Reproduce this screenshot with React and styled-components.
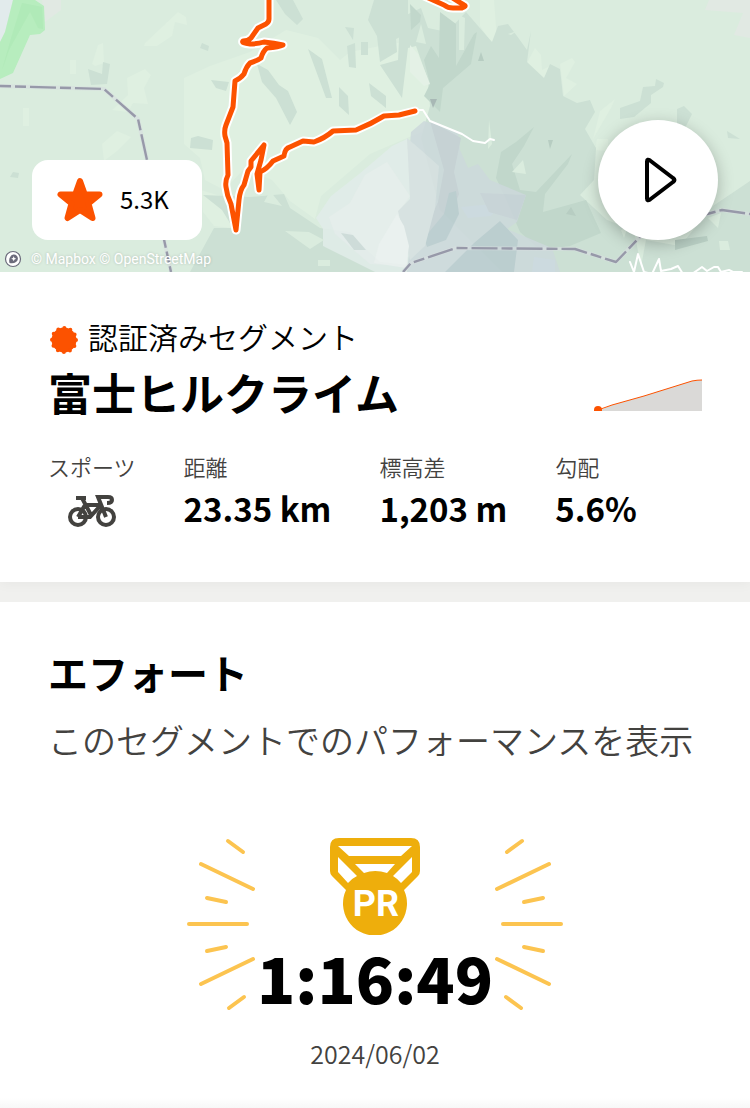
import React from 'react'
import styled, { createGlobalStyle } from 'styled-components'


const GlobalStyle = createGlobalStyle`
  * {
    box-sizing: border-box;
  }

  body {
    margin: 0;
    background: #f0f0ee;
    color: #000;
    font-family: "Noto Sans CJK JP", sans-serif;
  }
`

const stats = [
  { label: '距離', value: '23.35 km' },
  { label: '標高差', value: '1,203 m' },
  { label: '勾配', value: '5.6%' }
]

// one side of the burst around the medal, the other side is mirrored
const rays = [
  'M41 3L56 14',
  'M14 26L66 51',
  'M20 60L39 64',
  'M2 86H60',
  'M20 113L39 109',
  'M14 146L66 121',
  'M42 170L57 159'
]

const track = 'M269 -4V19Q269 22 266 24L258 28 251 38Q248 41 243 41 241 43 250 44 258 44 264 42 274 43 283 45 279 47 267 48 263 51 261 58 257 61 250 63 246 67 244 74 241 78 235 81L233 107 226 125Q224 130 225 136L227 143 228 175Q225 181 226 187 227 196 231 204L236 230 239 200Q240 190 244 185L248 171 251 167V161L264 145 261 160 257 174 259 190M259 190L260 172Q267 169 273 161L284 156Q285 148 290 147L303 141 314 142Q325 138 333 131L356 130Q371 124 384 116L399 115 415 111M424 -4L444 5Q448 8 453 8H462Q467 6 464 5L451 -3'


const TerrainMap = () =>
  <MapDrawing viewBox="0 0 750 272" preserveAspectRatio="xMidYMid slice" aria-hidden="true">
    <path fill="#daecde" d="M0 0H750V272H0z" />
    <path fill="#e2ebec" d="M0 0H13L5 32 0 42z" />
    <path fill="#e1e9e3" d="M42 0H61V10L45 22zM709 0H750V38L734 35 743 13 705 10z" />
    <path fill="#b7edbe" d="M13 0H35L44 6 45 30 40 34 30 35 13 73 0 79V42L5 32z" />
    <path fill="#a9e7b2" opacity=".5" d="M22 3L42 7 43 29 38 28 30 12 20 30 9 50 2 70 12 35z" />

    {/* open meadows */}
    <g fill="#dff0e1">
      <path d="M145 43L162 27 178 12 186 17 187 25 175 22 172 36 157 46 144 46z" />
      <path d="M127 78L145 69 151 75 144 88 148 104 133 103 128 112 112 110 128 95z" />
      <path d="M92 64L98 45 103 43 104 63 95 66zM70 60H76V74H70zM23 108H29V126H23z" />
      <path d="M102 144L117 131 131 137 117 151 104 161z" />
      <path d="M184 78L210 66 250 52 286 30 318 38 340 60 350 52 390 44 420 40 431 77 438 108 421 132 370 154 321 196 315 219 290 201 272 180 245 168 224 190 205 180 200 158 184 144z" />
      <path d="M201 190L233 200 232 228 214 226 203 212z" />
      <path d="M480 0H494L497 40 491 42 480 26zM520 76L535 48 541 55 542 70 552 65 546 83 540 77zM560 64L572 58 575 62 566 78 577 84 564 96z" />
      <path d="M570 134L577 116 585 120 581 135zM600 111L615 99 611 108 593 139zM597 139H608V151L595 150z" />
    </g>

    {/* shaded slopes */}
    <g fill="#cce0d4">
      <path d="M88 69L102 74 103 62 110 64 107 84 91 85z" />
      <path d="M191 138L198 136 213 140 212 150 190 148zM211 80L229 82 226 91 216 88zM202 43L209 46 208 51 200 48zM13 172L19 173 18 178 10 177z" />
      <path d="M203 195L250 197 284 194 290 208 320 228 350 232 362 245 380 262 407 265 407 272H190L202 250 214 228 233 228 222 210z" />
      <path d="M276 0H293L303 19 297 25 285 14zM308 49L322 59 332 98 326 98zM257 64L268 70 279 85 288 91 297 112 290 125 276 98 262 82z" />
      <path d="M339 87L348 96 349 115 339 106zM369 83L386 96 386 108 371 96zM347 46L355 43 356 68 349 67zM361 42H368V55H361zM345 27L354 28 353 40z" />
      <path d="M374 0H408V33L396 39 397 52 380 62 377 36 368 20z" />
      <path d="M400 18L421 8 428 28 447 32 466 12 492 42 498 26 508 24 517 36 527 50 531 31 527 62 544 78 550 64 560 69 563 96 577 103 590 100 595 112 585 129 596 148 594 180 580 195 607 220 634 230 642 272H502L440 210 421 138 430 106 428 80 416 46 408 48 402 98 380 65 398 60z" />
      <path d="M620 108L640 101 643 87 655 86 656 79 664 83 663 87 651 95 651 103 634 117 620 119zM677 109L684 106 692 114 685 128 677 124z" />
      <path d="M727 131L740 139 728 138zM713 206L750 181V272H640L646 240 680 246z" />
    </g>
    <g fill="#c1d7cb">
      <path d="M410 4L421 15 420 22 411 30zM440 12L456 24V66L474 34 477 32 471 64 443 88 440 112 424 96 430 84 424 60 431 46 439 58z" />
      <path d="M501 152L516 142 534 127 524 146 512 164 520 190 536 192 572 154 568 164 545 194 543 212 586 200 601 233 570 246 540 250 520 232 504 195 496 178z" />
    </g>
    <path fill="#e4f1e6" d="M410 45L418 54 430 84 424 86 410 72z" />
    <path fill="#a8b8b5" d="M430 99H437L433 108z" />
    <path fill="#b7cdc2" d="M548 140H553L550 149zM675 240L707 236 708 241 675 250zM571 207L576 216 566 214zM481 52L484 61H478z" />

    {/* rocky summit */}
    <g opacity=".85">
      <path fill="#cdd9dc" d="M411 132L424 121 458 132 460 150 468 168 478 164 490 180 526 195 517 222 507 229 552 248 560 272H403L405 205z" />
      <path fill="#c5d0d5" d="M430 121L461 138 454 172 459 194 450 218 427 246 430 220 438 202 444 170z" />
      <path fill="#b9cbcf" d="M456 191L459 214 446 240 427 247 424 238 444 214 449 193zM500 221L518 240 514 272H445L474 243z" />
      <path fill="#cdd9e1" d="M461 207L503 203 491 216 468 218zM534 257L555 260V272H532z" />
      <path fill="#c8d3d8" d="M480 193L526 195 517 220 489 212z" />
      <path fill="#e2edea" d="M392 146L407 139 414 205 407 272H375L323 246V229L316 218 331 196 359 174z" />
      <path fill="#e8efee" d="M365 175L387 162 410 196 400 210 409 244 407 266 370 264 335 234 329 217 350 203z" />
      <path fill="#d7e1e2" d="M407 138L421 150 439 166 435 208 425 246 410 260 402 228 398 211 410 199z" />
      <path fill="#edf2f2" d="M379 244L397 214 404 226 409 246 406 268 374 263z" />
      <path fill="#cfdcdb" d="M341 233L353 235 366 250 354 250z" />
    </g>

    {/* clearings on the dark slopes */}
    <g fill="#daecde">
      <path d="M270 191L282 206 264 202zM285 231L309 232 324 240 310 249zM318 260H330V266H318z" />
      <path d="M430 14L437 18 436 28 430 26zM421 24L426 44 416 42zM459 15L465 18 464 50H459zM508 34L517 31 511 35z" />
      <path d="M489 120L492 144 488 149zM512 172L523 160 526 174z" />
      <path d="M621 230L628 226 624 238zM708 218L721 213 718 228zM719 241L728 241 730 250 720 250z" />
    </g>

    <Boundary d="M0 86L104 89 138 119 147 160 171 272" />
    <Boundary d="M403 272L411 263 456 248 575 249 616 262 660 216 707 214 722 210 750 214" />

    <g fill="none" stroke="#fff" strokeLinecap="round" strokeLinejoin="round" strokeWidth="2">
      <path d="M415 110L423 110 430 121 462 134 473 141 485 143 490 139 494 140" />
      <path d="M630 262L634 272 638 254 644 272 652 274 659 259 661 271 671 269 678 266 683 274M692 274L702 267 707 271 714 267 718 267 721 272 729 270 733 272 742 272" />
    </g>

    <Track d={track} $halo />
    <Track d={track} />
  </MapDrawing>


export default function App() {
  return (
    <Page>
      <GlobalStyle />

      <MapPanel>
        <TerrainMap />
        <StarButton type="button">
          <svg width="48" height="46" viewBox="0 0 48 46" aria-hidden="true">
            <path
              fill="#fc5200" stroke="#fc5200" strokeWidth="6" strokeLinejoin="round"
              d="M24 4L28.8 17.5H43.5L32.5 26.5 36.5 41 24 33 11.5 41 15.5 26.5 4.5 17.5H19.2z"
            />
          </svg>
          <span>5.3K</span>
        </StarButton>
        <PlayButton type="button" aria-label="再生">
          <svg width="36" height="48" viewBox="0 0 36 48" aria-hidden="true">
            <path fill="none" stroke="#000" strokeWidth="4" strokeLinejoin="round" d="M5 5.5Q5 2.5 8 4.5L31 22Q34 24 31 26L8 43.5Q5 45.5 5 42.5z" />
          </svg>
        </PlayButton>
        <Attribution>
          <svg width="18" height="18" viewBox="0 0 18 18" aria-hidden="true">
            <circle cx="9" cy="9" r="7.5" fill="#fff" stroke="#6b6b7b" strokeWidth="1.2" />
            <path fill="#6b6b7b" d="M5.5 13Q4.5 9 6.5 6.5A4 4 0 1 1 12 12Q9.5 13.8 5.5 13z" />
            <path fill="#fff" d="M9.7 6.2L10.5 7.9 12.2 8.7 10.5 9.5 9.7 11.2 8.9 9.5 7.2 8.7 8.9 7.9z" />
          </svg>
          <span>
            <a href="#mapbox">© Mapbox</a> <a href="#osm">© OpenStreetMap</a>
          </span>
        </Attribution>
      </MapPanel>

      <Summary>
        <Verified>
          <svg width="28" height="28" viewBox="0 0 28 28" aria-hidden="true">
            <circle cx="14" cy="14" r="12.5" fill="#fc5200" />
            <circle cx="14" cy="14" r="12" fill="none" stroke="#fc5200" strokeWidth="4" strokeLinecap="round" strokeDasharray="0 6.283" />
          </svg>
          認証済みセグメント
        </Verified>
        <TitleRow>
          <Title>富士ヒルクライム</Title>
          <svg width="108" height="32" viewBox="0 0 108 32" aria-hidden="true">
            <path fill="#dad9d7" d="M4 32L18 26 50 17 98 2 108 1V32z" />
            <path fill="none" stroke="#fc5200" d="M4 31L18 26 50 17 98 2Q103 1 108 1" />
            <circle cx="4" cy="31" r="4" fill="#fc5200" />
          </svg>
        </TitleRow>
        <Stats>
          <Stat>
            <dt>スポーツ</dt>
            <SportValue>
              <svg width="50" height="34" viewBox="0 0 50 34" role="img" aria-label="自転車">
                <g fill="none" stroke="#43423f" strokeWidth="4">
                  <circle cx="11" cy="22" r="8" />
                  <circle cx="39" cy="22" r="8" />
                  <path d="M9 3H19M15 3L24 20M11 22L18 10H34M11 22H23L34 10M39 22L31 2H41Q45 2 45 5T40 8" />
                </g>
              </svg>
            </SportValue>
          </Stat>
          {stats.map(({ label, value }) =>
            <Stat key={label}>
              <dt>{label}</dt>
              <dd>{value}</dd>
            </Stat>
          )}
        </Stats>
      </Summary>

      <Efforts>
        <SectionTitle>エフォート</SectionTitle>
        <Description>このセグメントでのパフォーマンスを表示</Description>
        <Best>
          <Rays />
          <Record>
            <Medal />
            <Time>1:16:49</Time>
          </Record>
          <Rays $flip />
        </Best>
        <DateText dateTime="2024-06-02">2024/06/02</DateText>
      </Efforts>
    </Page>
  )
}

function Boundary({ d }) {
  return (
    <g fill="none" strokeLinejoin="round">
      <path d={d} stroke="#d7dde0" strokeWidth="4" opacity=".6" />
      <path d={d} stroke="#9799a9" strokeWidth="2.4" strokeDasharray="26 4 11 4" strokeDashoffset="15" />
    </g>
  )
}

function Rays({ $flip }) {
  return (
    <RaysDrawing $flip={$flip} width="68" height="173" viewBox="0 0 68 173" aria-hidden="true">
      {rays.map(d => <path key={d} d={d} />)}
    </RaysDrawing>
  )
}

function Medal() {
  return (
    <svg width="90" height="97" viewBox="0 0 90 97" role="img" aria-label="PR">
      <path
        fill="#eeae0c" fillRule="evenodd"
        d="M9 0H81Q90 0 90 9V33Q90 36 88 38L74 52A32 32 0 1 1 16 52L2 38Q0 36 0 33V9Q0 0 9 0zM8 8L19 18H71L82 8zM8 19V34L18 45Q21 41 27 38zM82 19V34L71 45Q68 41 63 38zM25 26L34 35Q45 31 57 35L65 26z"
      />
      <MedalText x="46" y="78" textAnchor="middle">PR</MedalText>
    </svg>
  )
}


const Page = styled.main`
  display: flex;
  flex-direction: column;
`

const MapPanel = styled.section`
  position: relative;
  height: 272px;
  overflow: hidden;
`

const MapDrawing = styled.svg`
  display: block;
  width: 100%;
  height: 100%;
`

const Track = styled.path`
  fill: none;
  stroke: ${props => props.$halo ? '#fff' : '#fc5200'};
  stroke-width: ${props => props.$halo ? 9 : 5};
  stroke-linecap: round;
  stroke-linejoin: round;
`

const StarButton = styled.button`
  position: absolute;
  left: 32px;
  bottom: 32px;
  display: flex;
  align-items: center;
  gap: 16px;
  height: 80px;
  padding: 0 33px 0 24px;
  border: 0;
  border-radius: 16px;
  background: #fff;
  color: #000;
  font: 400 24px/32px "Noto Sans CJK JP", sans-serif;

  span {
    padding-bottom: 2px;
  }
`

const PlayButton = styled.button`
  position: absolute;
  right: 32px;
  bottom: 32px;
  display: grid;
  place-items: center;
  width: 120px;
  height: 120px;
  padding: 0 0 0 4px;
  border: 0;
  border-radius: 50%;
  background: #fff;
  box-shadow: 0 4px 16px rgba(0, 0, 0, .25);
`

const Attribution = styled.div`
  position: absolute;
  left: 4px;
  bottom: 4px;
  display: flex;
  align-items: center;
  gap: 9px;
  font: 14px/18px Roboto, sans-serif;
  color: #fff;
  text-shadow: 0 0 3px rgba(0, 0, 0, .2);

  a {
    color: inherit;
    text-decoration: none;
  }
`

const Summary = styled.section`
  padding: 44px 48px 50px;
  background: #fff;
  box-shadow: 0 2px 12px rgba(0, 0, 0, .04);
`

const Verified = styled.div`
  display: flex;
  align-items: center;
  gap: 10px;
  padding-left: 2px;
  font-size: 30px;
  font-weight: 350;
  line-height: 40px;

  svg {
    margin-top: 8px;
  }
`

const TitleRow = styled.div`
  display: flex;
  align-items: center;
  justify-content: space-between;
  margin: 4px 0 24px;

  svg {
    margin-top: 6px;
  }
`

const Title = styled.h1`
  margin: 0;
  font-size: 44px;
  font-weight: 700;
  line-height: 64px;
`

const Stats = styled.dl`
  display: flex;
  gap: 48px;
  margin: 0;
`

const Stat = styled.div`
  dt {
    color: #43423f;
    font-size: 22px;
    font-weight: 350;
    line-height: 36px;
  }

  dd {
    margin: 0;
    font-size: 33px;
    font-weight: 700;
    line-height: 48px;
  }
`

const SportValue = styled.dd`
  display: flex;
  justify-content: center;
  padding-top: 11px;
`

const Efforts = styled.section`
  display: flex;
  flex-direction: column;
  margin-top: 20px;
  padding: 38px 48px 32px;
  background: linear-gradient(to top, #f7f7f7, #fff 10px);
`

const SectionTitle = styled.h2`
  margin: 0 0 8px;
  font-size: 40px;
  font-weight: 700;
  line-height: 64px;
`

const Description = styled.p`
  margin: 0;
  color: #43423f;
  font-size: 34px;
  font-weight: 350;
  line-height: 56px;
`

const Best = styled.div`
  display: flex;
  justify-content: center;
  align-items: flex-start;
  margin-top: 70px;
`

const Record = styled.div`
  display: flex;
  flex-direction: column;
  align-items: center;
  width: 240px;
`

const RaysDrawing = styled.svg`
  fill: none;
  stroke: #fcc450;
  stroke-width: 4;
  stroke-linecap: round;
  ${props => props.$flip && 'transform: scaleX(-1);'}
`

const MedalText = styled.text`
  fill: #fff;
  font: 700 36px Roboto, sans-serif;
`

const Time = styled.strong`
  font-size: 63px;
  font-weight: 900;
  line-height: 84px;
`

const DateText = styled.time`
  margin: 16px 0 5px;
  color: #43423f;
  font-size: 25px;
  font-weight: 350;
  line-height: 36px;
  text-align: center;
`
